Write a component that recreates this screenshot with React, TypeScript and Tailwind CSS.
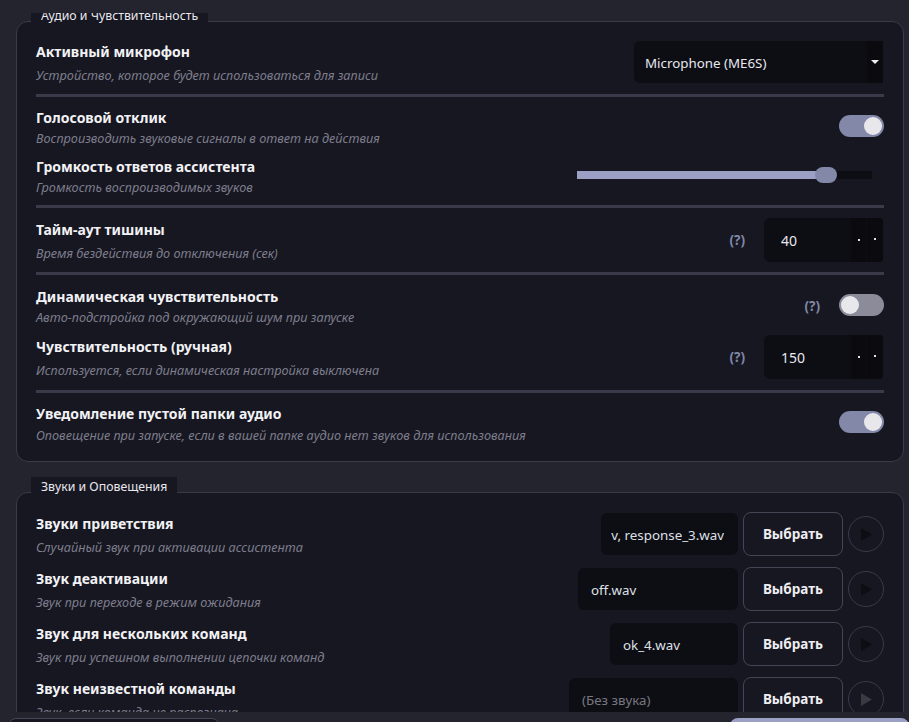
import * as React from 'react'
import { clsx } from 'clsx'

const Separator = ({ className }: { className?: string }) => (
  <div className={clsx('h-[3px] bg-[#3a3a4a]', className)} />
)

interface RowProps {
  title: string
  hint: string
  className?: string
  textClass?: string
  children?: React.ReactNode
}

const Row = ({ title, hint, className, textClass, children }: RowProps) => (
  <div className={clsx('flex items-center justify-between', className)}>
    <div className={clsx('flex flex-col self-start', textClass)}>
      <div className="text-[14px] font-bold leading-5 text-[#f2f2f5]">{title}</div>
      <div className="text-[12.7px] italic leading-4 text-[#7d7d8c]">{hint}</div>
    </div>
    {children}
  </div>
)

const Toggle = ({ on, className }: { on?: boolean; className?: string }) => (
  <div
    className={clsx(
      'flex h-[22px] w-[45px] items-center rounded-full px-[2px]',
      on ? 'justify-end bg-[#8488a8]' : 'justify-start bg-[#8b8b99]',
      className,
    )}
  >
    <div className="h-[18px] w-[18px] rounded-full bg-[#e8e8ec]" />
  </div>
)

const Help = () => (
  <span className="text-[13.5px] font-bold leading-4 text-[#8088a8]">(?)</span>
)

const SpinBox = ({ value }: { value: number }) => (
  <div className="mr-px flex h-[44px] w-[119px] items-stretch overflow-hidden rounded-l-md rounded-r-sm bg-[#0d0d14]">
    <div className="flex flex-1 items-center pl-[17px] text-[14px] text-[#e8e8ee]">{value}</div>
    <div className="flex w-[15px] items-center justify-center bg-[#0a0a0f]">
      <div className="mb-px h-[2px] w-[2px] bg-[#e0e0e6]" />
    </div>
    <div className="ml-px flex w-[16px] items-center justify-center bg-[#0a0a0f]">
      <div className="mb-[2px] h-[2px] w-[2px] bg-[#e0e0e6]" />
    </div>
  </div>
)

const PlayIcon = ({ muted }: { muted?: boolean }) => (
  <svg width="11" height="13" viewBox="0 0 11 13" className={muted ? 'fill-[#3a3a42]' : 'fill-[#0d0d14]'}>
    <path d="M0 0 L11 6.5 L0 13 Z" />
  </svg>
)

interface SoundRowProps {
  title: string
  hint: string
  file: string
  inputClass: string
  muted?: boolean
  alignEnd?: boolean
}

const SoundRow = ({ title, hint, file, inputClass, muted, alignEnd }: SoundRowProps) => (
  <Row title={title} hint={hint} className="h-[44px]" textClass="gap-[5px] pt-[2px]">
    <div className="flex items-center gap-[5px]">
      <div className={clsx('flex h-[42px] items-center rounded-md bg-[#0d0d14] pb-0 pt-[3px]', inputClass)}>
        <div className={clsx('flex w-full overflow-hidden whitespace-nowrap text-[13.33px]', alignEnd && 'justify-end', muted ? 'text-[#77777f]' : 'text-[#dfe0e6]')}>
          <span className="shrink-0">{file}</span>
        </div>
      </div>
      <button className="h-[44px] w-[100px] rounded-lg border border-[#454555] pt-px text-[13.5px] font-bold text-[#eeeef2]">
        Выбрать
      </button>
      <div className="flex h-[36px] w-[36px] items-center justify-center rounded-full border border-[#3a3a4a]">
        <PlayIcon muted={muted} />
      </div>
    </div>
  </Row>
)

const Card = ({ legend, children }: { legend: string; children: React.ReactNode }) => (
  <section className="relative rounded-xl border border-[#3a3a4a] bg-[#171721] pl-[19px] pr-[19px] pt-[19px] pb-[18px]">
    <div className="absolute -top-[16px] left-[14px] h-[17px] whitespace-nowrap bg-[#171721] px-[10px] text-[12.3px] leading-[20px] text-[#e8e8ee]">
      {legend}
    </div>
    {children}
  </section>
)

export default function App() {
  return (
    <div
      className="flex h-[722px] w-[909px] flex-col overflow-hidden bg-[#24242e]"
      style={{ fontFamily: '"Noto Sans", "Open Sans", sans-serif' }}
    >
      <div className="mt-[13px] h-[699px] shrink-0 overflow-hidden pl-[16px] pr-[5px] pt-[8px]">
        <Card legend="Аудио и Чувствительность">
          <Row
            title="Активный микрофон"
            hint="Устройство, которое будет использоваться для записи"
            className="h-[42px]"
            textClass="gap-[5px] pt-px"
          >
            <div className="mr-px flex h-[42px] w-[249px] items-center justify-between rounded-l-md bg-[#0d0d14]">
              <span className="pl-[11px] pt-[3px] text-[13.33px] text-[#e8e8ee]">Microphone (ME6S)</span>
              <div className="flex h-full w-[16px] items-center justify-center bg-[#0a0a0f]">
                <div className="mb-px mr-[1px] h-0 w-0 border-x-4 border-t-[4px] border-x-transparent border-t-[#f0f0f0]" />
              </div>
            </div>
          </Row>
          <Separator className="mt-[11px]" />
          <Row
            title="Голосовой отклик"
            hint="Воспроизводить звуковые сигналы в ответ на действия"
            className="mt-[11px] h-[38px]"
            textClass="gap-[2px]"
          >
            <Toggle on className="mb-[2px]" />
          </Row>
          <Row
            title="Громкость ответов ассистента"
            hint="Громкость воспроизводимых звуков"
            className="mt-[11px] h-[38px]"
            textClass="gap-[2px]"
          >
            <div className="mb-[2px] mr-[12px] flex h-[8px] w-[295px] items-center bg-[#0d0d14]">
              <div className="h-full w-[240px] bg-[#9ca0c4]" />
              <div className="h-[16px] w-[22px] -translate-x-[2px] rounded-full bg-[#8488a8]" />
            </div>
          </Row>
          <Separator className="mt-[10px]" />
          <Row
            title="Тайм-аут тишины"
            hint="Время бездействия до отключения (сек)"
            className="mt-[10px] h-[44px]"
            textClass="gap-[5px] pt-[2px]"
          >
            <div className="flex items-center gap-[19px]">
              <Help />
              <SpinBox value={40} />
            </div>
          </Row>
          <Separator className="mt-[10px]" />
          <Row
            title="Динамическая чувствительность"
            hint="Авто-подстройка под окружающий шум при запуске"
            className="mt-[12px] h-[38px]"
            textClass="gap-[2px]"
          >
            <div className="flex items-center gap-[19px]">
              <Help />
              <Toggle className="mb-[2px]" />
            </div>
          </Row>
          <Row
            title="Чувствительность (ручная)"
            hint="Используется, если динамическая настройка выключена"
            className="mt-[10px] h-[44px]"
            textClass="gap-[5px] pt-[2px]"
          >
            <div className="flex items-center gap-[19px]">
              <Help />
              <SpinBox value={150} />
            </div>
          </Row>
          <Separator className="mt-[11px]" />
          <Row
            title="Уведомление пустой папки аудио"
            hint="Оповещение при запуске, если в вашей папке аудио нет звуков для использования"
            className="mt-[11px] h-[39px]"
            textClass="gap-[3px]"
          >
            <Toggle on className="mb-[3px]" />
          </Row>
        </Card>

        <div className="mt-[30px]">
          <Card legend="Звуки и Оповещения">
            <div className="flex flex-col gap-[11px]">
              <SoundRow
                title="Звуки приветствия"
                hint="Случайный звук при активации ассистента"
                file="response_1.wav, response_2.wav, response_3.wav"
                inputClass="w-[137px] pl-[10px] pr-[14px]"
                alignEnd
              />
              <SoundRow
                title="Звук деактивации"
                hint="Звук при переходе в режим ожидания"
                file="off.wav"
                inputClass="w-[160px] px-[13px]"
              />
              <SoundRow
                title="Звук для нескольких команд"
                hint="Звук при успешном выполнении цепочки команд"
                file="ok_4.wav"
                inputClass="w-[128px] px-[13px]"
              />
              <SoundRow
                title="Звук неизвестной команды"
                hint="Звук, если команда не распознана"
                file="(Без звука)"
                inputClass="w-[169px] px-[13px]"
                muted
              />
            </div>
          </Card>
        </div>
      </div>

      <div className="flex flex-1 items-start justify-between overflow-hidden pl-[8px] pt-[6px]">
        <div className="h-[30px] w-[212px] shrink-0 rounded-lg border border-[#454555] bg-[#171721]" />
        <div className="h-[30px] w-[179px] shrink-0 rounded-t-lg bg-[#9ca0c4]" />
      </div>
    </div>
  )
}
